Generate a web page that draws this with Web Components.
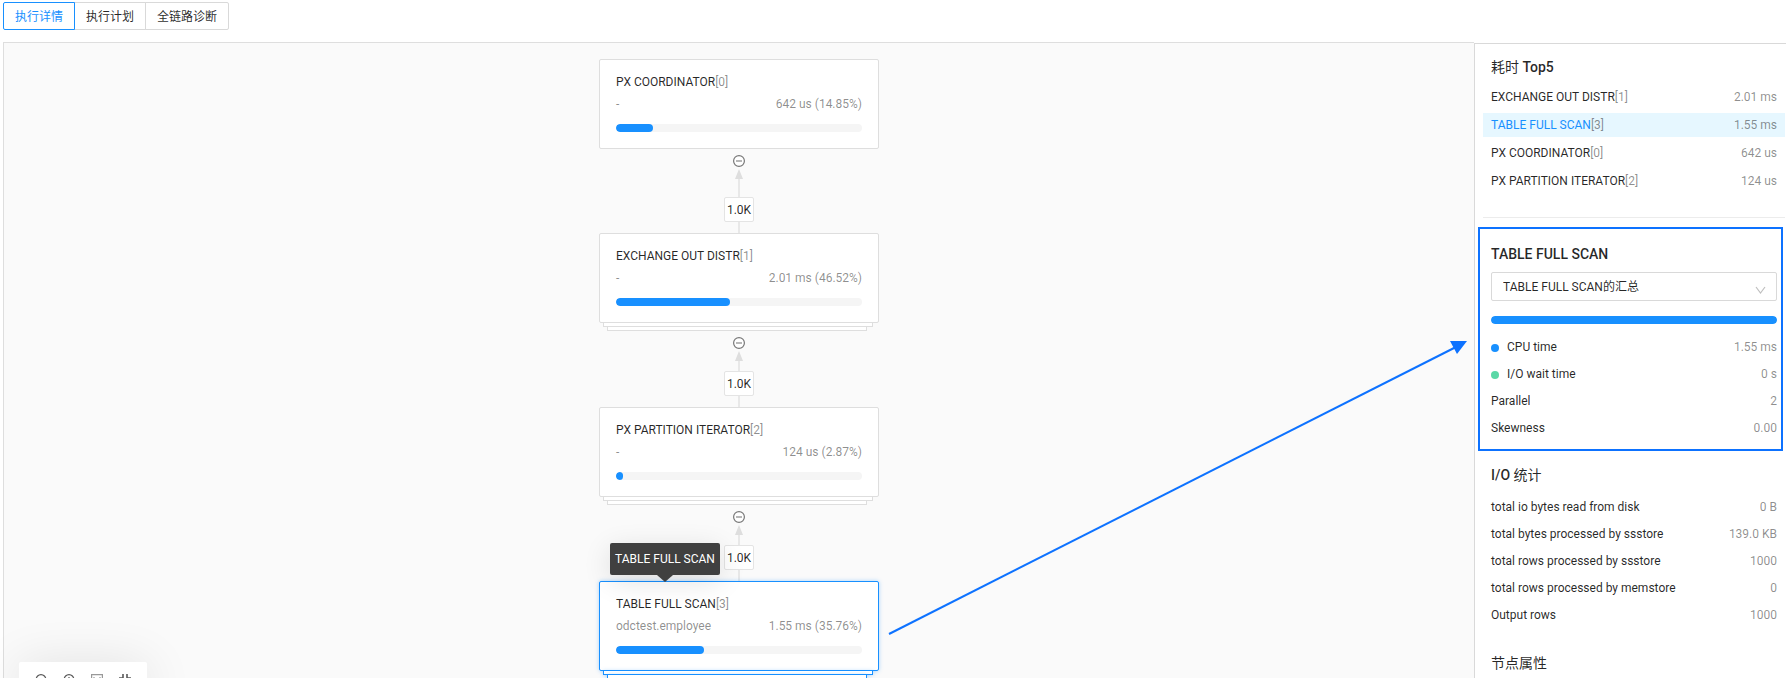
<!DOCTYPE html>
<html lang="zh-CN">
<head>
<meta charset="utf-8">
<title>执行详情</title>
<style>
    html {
        --primary-color: #1890ff;
        --mark-color: #0d72ff;
        --border-color: #d9d9d9;
        --text-color: rgba(0, 0, 0, 0.85);
        --muted-color: rgba(0, 0, 0, 0.45);
    }
    body {
        margin: 0;
        height: 100vh;
        overflow: hidden;
        background: #fff;
        color: var(--text-color);
        font: 12px/20px Roboto, "Noto Sans CJK SC", sans-serif;
    }
</style>
</head>
<body>
<profile-page></profile-page>

<script>
class ViewTabs extends HTMLElement {
    constructor() {
        super();
        this.attachShadow({ mode: 'open' });
        this.shadowRoot.innerHTML = `
<style>
    :host {
        display: flex;
    }
    button {
        height: 28px;
        padding: 1px 11px 0;
        margin: 0 0 0 -1px;
        border: 1px solid var(--border-color);
        background: #fff;
        color: inherit;
        font: inherit;
        cursor: pointer;
    }
    button:first-of-type {
        margin-left: 0;
        border-radius: 2px 0 0 2px;
    }
    button:last-of-type {
        border-radius: 0 2px 2px 0;
    }
    button.active {
        position: relative;
        border-color: var(--primary-color);
        color: var(--primary-color);
    }
</style>
<button type="button" class="active">执行详情</button>
<button type="button">执行计划</button>
<button type="button">全链路诊断</button>
        `;

        this.shadowRoot.querySelectorAll('button').forEach(button => {
            button.onclick = () => {
                this.shadowRoot.querySelector('.active').classList.remove('active');
                button.classList.add('active');
            };
        });
    }
}

class ProgressBar extends HTMLElement {
    constructor() {
        super();
        this.attachShadow({ mode: 'open' });
        this.shadowRoot.innerHTML = `
<style>
    :host {
        display: block;
        height: 8px;
        border-radius: 4px;
        background: #f5f5f5;
        overflow: hidden;
    }
    .fill {
        height: 100%;
        border-radius: 4px;
        background: var(--primary-color);
    }
</style>
<div class="fill"></div>
        `;
    }

    connectedCallback() {
        this.shadowRoot.querySelector('.fill').style.width = this.getAttribute('value') + '%';
    }
}

class PlanNode extends HTMLElement {
    constructor() {
        super();
        this.attachShadow({ mode: 'open' });
    }

    connectedCallback() {
        const name = this.getAttribute('name');
        const plates = this.hasAttribute('parallel') ? '<div class="plate"></div><div class="plate inner"></div>' : '';
        const tooltip = this.hasAttribute('selected') ? `<div class="tooltip" role="tooltip">${name}</div>` : '';

        this.shadowRoot.innerHTML = `
<style>
    :host {
        --line-color: #dedede;
        display: block;
        position: relative;
        width: 280px;
    }
    :host([selected]) {
        --line-color: var(--primary-color);
    }
    .card {
        box-sizing: border-box;
        height: 90px;
        padding: 12px 16px;
        border: 1px solid var(--line-color);
        border-radius: 2px;
        background: #fff;
    }
    :host([selected]) .card,
    :host([selected]) .plate {
        box-shadow: 0 0 4px rgba(24, 144, 255, 0.35);
    }
    .index, .detail {
        color: var(--muted-color);
    }
    .detail {
        display: flex;
        justify-content: space-between;
        margin: 2px 0 10px;
    }
    .plate {
        box-sizing: border-box;
        height: 4px;
        margin: 0 6px 0 4px;
        border: 1px solid var(--line-color);
        border-top: 0;
        background: #fff;
    }
    .plate.inner {
        margin: 0 12px 0 8px;
    }
    .tooltip {
        position: absolute;
        top: -38px;
        left: 11px;
        padding: 6px 5px;
        border-radius: 2px;
        background: #404040;
        color: #fff;
        box-shadow: 0 6px 28px rgba(0, 0, 0, 0.12);
        white-space: nowrap;
    }
    .tooltip::after {
        content: "";
        position: absolute;
        top: 100%;
        left: 50%;
        margin-left: -8px;
        border: 8px solid transparent;
        border-width: 7px 8px 0;
        border-top-color: #404040;
    }
</style>
<div class="card">
    <div>${name}<span class="index">[${this.getAttribute('index')}]</span></div>
    <div class="detail"><span>${this.getAttribute('target') || '-'}</span><span>${this.getAttribute('cost')} (${this.getAttribute('percent')}%)</span></div>
    <progress-bar value="${this.getAttribute('percent')}"></progress-bar>
</div>
${plates}
${tooltip}
        `;
    }
}

class PlanEdge extends HTMLElement {
    constructor() {
        super();
        this.attachShadow({ mode: 'open' });
        this.shadowRoot.innerHTML = `
<style>
    :host {
        flex: 1;
        display: flex;
        flex-direction: column;
        align-items: center;
        padding-top: 6px;
    }
    button {
        display: flex;
        margin: 0 0 2px;
        padding: 0;
        border: 0;
        background: none;
        cursor: pointer;
    }
    .head {
        border: 4px solid transparent;
        border-width: 0 4px 10px;
        border-bottom-color: #dedede;
    }
    .line {
        flex: 1;
        width: 2px;
        background: #e8e8e8;
    }
    .line.end {
        flex: 0 0 11px;
    }
    .rows {
        box-sizing: border-box;
        height: 25px;
        padding: 2px;
        border: 1px solid #e4e4e4;
        border-radius: 2px;
        background: #fff;
    }
</style>
<button type="button" aria-label="收起">
    <svg width="12" height="12" viewBox="0 0 12 12" fill="none">
        <circle cx="6" cy="6" r="5.4" fill="#fff" stroke="#777" stroke-width="1.2"/>
        <path d="M3 6h6" stroke="#999" stroke-width="1.4"/>
    </svg>
</button>
<div class="head"></div>
<div class="line"></div>
<div class="rows"><slot></slot></div>
<div class="line end"></div>
        `;
    }
}

class CanvasToolbar extends HTMLElement {
    constructor() {
        super();
        this.attachShadow({ mode: 'open' });
        this.shadowRoot.innerHTML = `
<style>
    :host {
        display: flex;
        gap: 14px;
        padding: 11px 15px;
        border-radius: 2px;
        background: #fff;
        box-shadow: 0 4px 50px rgba(0, 0, 0, 0.12);
    }
    button {
        display: flex;
        padding: 0;
        border: 0;
        background: none;
        cursor: pointer;
    }
    svg {
        fill: none;
        stroke: #595959;
        stroke-width: 1.2;
    }
</style>
<button type="button" aria-label="缩小"><svg width="14" height="14" viewBox="0 0 14 14"><circle cx="7" cy="6.4" r="4.8"/><path d="M4.6 6.4h4.8M10.4 10l3 3"/></svg></button>
<button type="button" aria-label="放大"><svg width="14" height="14" viewBox="0 0 14 14"><circle cx="7" cy="6.4" r="4.8"/><path d="M4.6 6.4h4.8M7 4v4.8M10.4 10l3 3"/></svg></button>
<button type="button" aria-label="实际大小"><svg width="14" height="14" viewBox="0 0 14 14"><path d="M1.6 1.6h10.8v10.8H1.6zM4 4v5M10 4v5M7 5v1M7 8v1" stroke="#999"/></svg></button>
<button type="button" aria-label="适应画布"><svg width="14" height="14" viewBox="0 0 14 14"><path d="M5 1v4H1M9 1v4h4M5 13V9H1M9 13V9h4" stroke-width="1.6"/></svg></button>
        `;
    }
}

class PlanCanvas extends HTMLElement {
    constructor() {
        super();
        this.attachShadow({ mode: 'open' });
        this.shadowRoot.innerHTML = `
<style>
    :host {
        display: block;
        position: relative;
        border: 1px solid #dedede;
        border-width: 1px 0 0 1px;
        background: #fafafa;
    }
    .tree {
        display: flex;
        flex-direction: column;
        align-items: center;
        padding-top: 16px;
    }
    .level {
        display: flex;
        flex-direction: column;
        height: 174px;
    }
    .pointer {
        position: absolute;
        top: 298px;
        left: calc(50% + 149px);
        pointer-events: none;
    }
    canvas-toolbar {
        position: absolute;
        left: 15px;
        bottom: -20px;
    }
</style>
<div class="tree">
    <div class="level">
        <plan-node name="PX COORDINATOR" index="0" cost="642 us" percent="14.85"></plan-node>
        <plan-edge>1.0K</plan-edge>
    </div>
    <div class="level">
        <plan-node name="EXCHANGE OUT DISTR" index="1" cost="2.01 ms" percent="46.52" parallel></plan-node>
        <plan-edge>1.0K</plan-edge>
    </div>
    <div class="level">
        <plan-node name="PX PARTITION ITERATOR" index="2" cost="124 us" percent="2.87" parallel></plan-node>
        <plan-edge>1.0K</plan-edge>
    </div>
    <plan-node name="TABLE FULL SCAN" index="3" target="odctest.employee" cost="1.55 ms" percent="35.76" parallel selected></plan-node>
</div>
<svg class="pointer" width="580" height="296" viewBox="0 0 580 296" aria-hidden="true">
    <path d="M1 293L568 6" stroke="#0d72ff" stroke-width="2"/>
    <path d="M579 0H562L569 13z" fill="#0d72ff"/>
</svg>
<canvas-toolbar></canvas-toolbar>
        `;
    }
}

class StatRow extends HTMLElement {
    constructor() {
        super();
        this.attachShadow({ mode: 'open' });
        this.shadowRoot.innerHTML = `
<style>
    :host {
        display: flex;
        justify-content: space-between;
        line-height: 27px;
    }
    .label {
        display: flex;
        align-items: center;
        gap: 8px;
    }
    :host([dot]) .label::before {
        content: "";
        width: 8px;
        height: 8px;
        border-radius: 50%;
        background: var(--primary-color);
    }
    :host([dot="wait"]) .label::before {
        background: #5ad8a6;
    }
    .value {
        color: var(--muted-color);
    }
</style>
<span class="label"><slot></slot></span>
<span class="value"><slot name="value"></slot></span>
        `;
    }
}

class StatPanel extends HTMLElement {
    constructor() {
        super();
        this.attachShadow({ mode: 'open' });
        this.shadowRoot.innerHTML = `
<style>
    :host {
        display: block;
        overflow: hidden;
        border: 1px solid var(--border-color);
        border-width: 1px 0 0 1px;
        background: #fff;
    }
    h3 {
        margin: 0 0 7px;
        font-size: 14px;
        line-height: 22px;
        font-weight: 500;
    }
    h3 span {
        font-weight: 400;
    }
    .top {
        margin: 0 1px 0 8px;
        padding: 12px 0 24px;
        border-bottom: 1px solid #ececec;
    }
    .top h3 {
        margin-left: 8px;
    }
    ul {
        display: grid;
        gap: 4px;
        margin: 0;
        padding: 0;
        list-style: none;
    }
    li {
        display: flex;
        justify-content: space-between;
        padding: 1px 8px 0;
        line-height: 23px;
    }
    li.active {
        background: #e6f7ff;
        color: var(--primary-color);
    }
    .muted {
        color: var(--muted-color);
    }
    .summary {
        margin: 9px 3px 13px;
        padding: 14px 4px 7px 11px;
        border: 2px solid var(--mark-color);
    }
    .picker {
        display: grid;
        align-items: center;
        margin-bottom: 15px;
    }
    .picker > * {
        grid-area: 1 / 1;
    }
    select {
        appearance: none;
        width: 100%;
        height: 29px;
        padding: 0 32px 0 11px;
        border: 1px solid var(--border-color);
        border-radius: 2px;
        background: #fff;
        color: inherit;
        font: inherit;
    }
    .picker svg {
        justify-self: end;
        margin: 6px 11px 0 0;
        pointer-events: none;
    }
    progress-bar {
        margin-bottom: 10px;
    }
    .group {
        margin: 0 9px 23px 16px;
    }
    .group h3 {
        margin-bottom: 8px;
    }
</style>
<section class="top">
    <h3><span>耗时</span> Top5</h3>
    <ul>
        <li><span>EXCHANGE OUT DISTR<span class="muted">[1]</span></span><span class="muted">2.01 ms</span></li>
        <li class="active"><span>TABLE FULL SCAN<span class="muted">[3]</span></span><span class="muted">1.55 ms</span></li>
        <li><span>PX COORDINATOR<span class="muted">[0]</span></span><span class="muted">642 us</span></li>
        <li><span>PX PARTITION ITERATOR<span class="muted">[2]</span></span><span class="muted">124 us</span></li>
    </ul>
</section>
<section class="summary">
    <h3 id="nodeName">TABLE FULL SCAN</h3>
    <div class="picker">
        <select aria-labelledby="nodeName"><option>TABLE FULL SCAN的汇总</option></select>
        <svg width="11" height="8" viewBox="0 0 11 8" fill="none" stroke="#bfbfbf" stroke-width="1.2"><path d="M1 1l4.5 6L10 1"/></svg>
    </div>
    <progress-bar value="100"></progress-bar>
    <stat-row dot="cpu">CPU time<span slot="value">1.55 ms</span></stat-row>
    <stat-row dot="wait">I/O wait time<span slot="value">0 s</span></stat-row>
    <stat-row>Parallel<span slot="value">2</span></stat-row>
    <stat-row>Skewness<span slot="value">0.00</span></stat-row>
</section>
<section class="group">
    <h3>I/O <span>统计</span></h3>
    <stat-row>total io bytes read from disk<span slot="value">0 B</span></stat-row>
    <stat-row>total bytes processed by ssstore<span slot="value">139.0 KB</span></stat-row>
    <stat-row>total rows processed by ssstore<span slot="value">1000</span></stat-row>
    <stat-row>total rows processed by memstore<span slot="value">0</span></stat-row>
    <stat-row>Output rows<span slot="value">1000</span></stat-row>
</section>
<section class="group">
    <h3><span>节点属性</span></h3>
</section>
        `;
    }
}

class ProfilePage extends HTMLElement {
    constructor() {
        super();
        this.attachShadow({ mode: 'open' });
        this.shadowRoot.innerHTML = `
<style>
    :host {
        display: flex;
        flex-direction: column;
        gap: 12px;
        box-sizing: border-box;
        height: 100%;
        padding: 2px 0 0 3px;
    }
    main {
        flex: 1;
        display: grid;
        grid-template-columns: 1fr 312px;
        min-height: 0;
    }
    plan-canvas {
        min-height: 0;
    }
    stat-panel {
        margin-top: 1px;
    }
</style>
<view-tabs></view-tabs>
<main>
    <plan-canvas></plan-canvas>
    <stat-panel></stat-panel>
</main>
        `;
    }
}

customElements.define('view-tabs', ViewTabs);
customElements.define('progress-bar', ProgressBar);
customElements.define('plan-node', PlanNode);
customElements.define('plan-edge', PlanEdge);
customElements.define('canvas-toolbar', CanvasToolbar);
customElements.define('plan-canvas', PlanCanvas);
customElements.define('stat-row', StatRow);
customElements.define('stat-panel', StatPanel);
customElements.define('profile-page', ProfilePage);
</script>
</body>
</html>
